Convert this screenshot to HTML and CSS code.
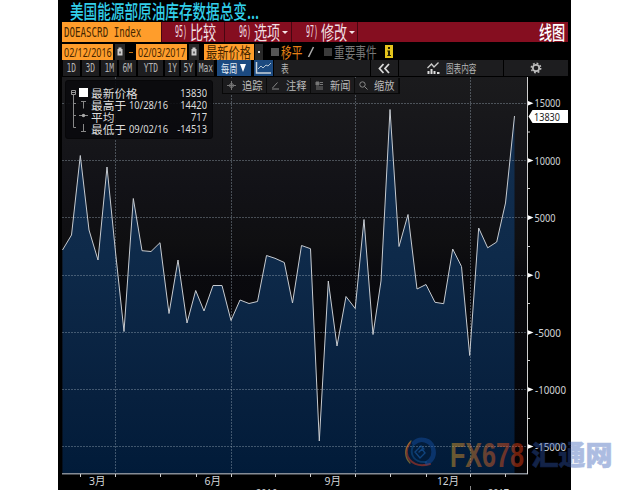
FILE: index.html
```html
<!DOCTYPE html>
<html lang="zh-CN">
<head>
<meta charset="utf-8">
<title>DOEASCRD Index</title>
<link rel="stylesheet" href="styles.css">
</head>
<body>
<main class="terminal">
  <h1 class="title"><span>美国能源部原油库存数据总变...</span></h1>

  <nav class="menu">
    <div class="ticker"><span class="mono">DOEASCRD Index</span></div>
    <div class="menu-item compare"><span class="num">95)</span><span class="label">比较</span></div>
    <div class="menu-item options"><span class="num">96)</span><span class="label">选项</span><i class="caret"></i></div>
    <div class="menu-item modify"><span class="num">97)</span><span class="label">修改</span><i class="caret"></i></div>
    <div class="chart-kind"><span class="label">线图</span></div>
  </nav>

  <div class="filters">
    <div class="date"><span>02/12/2016</span></div>
    <svg class="cal" viewBox="0 0 10 16"><path d="M0 0h10v16H0z" fill="#292929"/><path d="M2.500 5h5v6.500h-5zM3.500 3.500h3V5h-3z" fill="#ccc"/><path d="M4 7.500h2v2H4z" fill="#666"/></svg>
    <b class="dash"></b>
    <div class="date"><span>02/03/2017</span></div>
    <svg class="cal" viewBox="0 0 10 16"><path d="M0 0h10v16H0z" fill="#292929"/><path d="M2.500 5h5v6.500h-5zM3.500 3.500h3V5h-3z" fill="#ccc"/><path d="M4 7.500h2v2H4z" fill="#666"/></svg>
    <div class="field"><span>最新价格</span></div>
    <div class="drop"></div>
    <i class="check first"></i><span class="f-label move">移平</span>
    <svg class="pencil" viewBox="0 0 8 14"><path d="M1.500 12 6.500 2" stroke="#aaa" stroke-width="1.600"/></svg>
    <i class="check second"></i><span class="f-label events">重要事件</span>
    <svg class="info" viewBox="0 0 8 13"><path d="M0 0h8v13H0z" fill="#e5c51c"/><path d="M3 2h2v2H3zM2.300 5.500H5V10h1v1H2.300v-1H3V6.500h-.7z" fill="#242000"/></svg>
  </div>

  <div class="ranges">
    <div class="btn w17"><span>1D</span></div>
    <div class="btn w17"><span>3D</span></div>
    <div class="btn w16"><span>1M</span></div>
    <div class="btn w17"><span>6M</span></div>
    <div class="btn w25"><span>YTD</span></div>
    <div class="btn w14"><span>1Y</span></div>
    <div class="btn w14"><span>5Y</span></div>
    <div class="btn w17"><span>Max</span></div>
    <div class="period"><span>每周</span><i></i></div>
    <svg class="line-icon" viewBox="0 0 19 16"><path d="M0 0h19v16H0z" fill="#1c4a80"/><path d="M2.500 2v11H17" stroke="#c9d3dc" stroke-width="1.500" fill="none"/><path d="m4 9 3-3 2 2 3-3 2 1 3-3" stroke="#b5c4d3" fill="none"/></svg>
    <div class="table-btn"><span>表</span></div>
    <div class="spacer"></div>
    <div class="collapse"><svg viewBox="0 0 12 11"><path d="M5.500 1 1.500 5.500l4 4.500M11 1 7 5.500l4 4.500" stroke="#d8d8d8" stroke-width="1.800" fill="none"/></svg></div>
    <div class="content-btn"><svg viewBox="0 0 13 12"><path d="m.5 6 4-4L7 5l4.500-4.500" stroke="#ccc" stroke-width="1.300" fill="none"/><path d="M.5 9h2v3h-2zM3.500 7h2v5h-2zM6.500 9h2v3h-2zM10 10h2.500v2H10z" fill="#ddd"/></svg><span>图表内容</span></div>
    <div class="gear"><svg viewBox="0 0 12 12"><circle cx="6" cy="6" r="3.200" stroke="#bbb" stroke-width="1.800" fill="none"/><circle cx="6" cy="6" r="4.700" stroke="#bbb" stroke-width="1.500" stroke-dasharray="1.800 1.890" fill="none"/></svg></div>
  </div>

  <section class="chart">
    <svg class="plot" viewBox="62 77 509 413">
      <defs>
        <linearGradient id="bg" x1="0" y1="0" x2="0" y2="1">
          <stop offset="0" stop-color="#1b1b1d"/><stop offset=".28" stop-color="#121217"/><stop offset=".42" stop-color="#0f0f11"/><stop offset=".5" stop-color="#0a0a0e"/><stop offset="1" stop-color="#030306"/>
        </linearGradient>
        <linearGradient id="area" gradientUnits="userSpaceOnUse" x1="0" y1="110" x2="0" y2="474">
          <stop offset="0" stop-color="#132f50"/><stop offset=".4" stop-color="#0e2a4a"/><stop offset=".75" stop-color="#08213f"/><stop offset="1" stop-color="#011b39"/>
        </linearGradient>
      </defs>
      <rect x="62" y="77" width="465" height="396" fill="url(#bg)"/>
      <path fill="url(#area)" d="M62.500 250 71.500 235 80.300 155.500 89 230 98 260 107 167 115.500 252 124 331.500 133.300 198.500 142 250.700 151 251.500 160 242.700 169 313.500 178 260 187 323 195.700 290.500 204 311 213 285.500H222L231 320.500 240 300 249 303.500 257.500 301.500 266.500 255.500 275 258.300 284.300 262.500 292.500 303 301.500 245.500 310.500 248.700 319.300 441 328.300 281 337 346 346 296.500 355.200 308.500 364 219.500 373 334.500 381 281 390 109.500 399 246.500 408 214.500 417 289 426 284.500 435 302.300 443.700 303.700 452.700 249 461.500 266.500 469.700 355.500 478.700 228 487.700 247.800 496.700 242 505.500 203 514.500 116V473H62.500z"/>
      <path class="grid" d="M62 103.500H527M62 160.500H527M62 217.500H527M62 275.500H527M62 332.500H527M62 389.500H527M62 446.500H527M115.500 77V473M231.500 77V473M355.500 77V473M470.500 77V473"/>
      <path class="series" d="M62.500 250 71.500 235 80.300 155.500 89 230 98 260 107 167 115.500 252 124 331.500 133.300 198.500 142 250.700 151 251.500 160 242.700 169 313.500 178 260 187 323 195.700 290.500 204 311 213 285.500H222L231 320.500 240 300 249 303.500 257.500 301.500 266.500 255.500 275 258.300 284.300 262.500 292.500 303 301.500 245.500 310.500 248.700 319.300 441 328.300 281 337 346 346 296.500 355.200 308.500 364 219.500 373 334.500 381 281 390 109.500 399 246.500 408 214.500 417 289 426 284.500 435 302.300 443.700 303.700 452.700 249 461.500 266.500 469.700 355.500 478.700 228 487.700 247.800 496.700 242 505.500 203 514.500 116"/>
      <path class="axis-x" d="M62 473.700H528"/>
      <path class="axis" d="M527.500 77V474M528 132h2M528 188.500h2M528 246.500h2M528 303.500h2M528 360.500h2M528 418.500h2"/>
      <path class="axis" d="M80.500 474v3M115.500 474v3M160.500 474v3M196.500 474v3M231.500 474v3M275.500 474v3M310.500 474v3M355.500 474v3M390.500 474v3M426.500 474v3M470.500 474v3M505.500 474v3"/>
      <path d="M470.500 486v4" stroke="#888"/>
      <path class="marks" d="M528 101l5.500 2.300-5.500 2.300zM528 158.200l5.500 2.300-5.500 2.300zM528 215.300l5.500 2.300-5.500 2.300zM528 273l5.500 2.300-5.500 2.300zM528 330.200l5.500 2.300-5.500 2.300zM528 387.200l5.500 2.300-5.500 2.300zM528 444.200l5.500 2.300-5.500 2.300z"/>
      <g class="tick">
        <text x="534.500" y="107.300" textLength="26" lengthAdjust="spacingAndGlyphs">15000</text>
        <text x="534.500" y="164.500" textLength="26" lengthAdjust="spacingAndGlyphs">10000</text>
        <text x="534.500" y="221.800" textLength="21" lengthAdjust="spacingAndGlyphs">5000</text>
        <text x="534.500" y="279.300" textLength="5.500" lengthAdjust="spacingAndGlyphs">0</text>
        <text x="535" y="336.600" textLength="26" lengthAdjust="spacingAndGlyphs">-5000</text>
        <text x="535" y="393.800" textLength="31" lengthAdjust="spacingAndGlyphs">-10000</text>
        <text x="535" y="450.800" textLength="31" lengthAdjust="spacingAndGlyphs">-15000</text>
        <text x="89" y="485" textLength="16.500" lengthAdjust="spacingAndGlyphs">3月</text>
        <text x="204.500" y="485" textLength="16.500" lengthAdjust="spacingAndGlyphs">6月</text>
        <text x="324.500" y="485" textLength="16.500" lengthAdjust="spacingAndGlyphs">9月</text>
        <text x="437" y="485" textLength="22" lengthAdjust="spacingAndGlyphs">12月</text>
        <text x="256" y="497" textLength="21" lengthAdjust="spacingAndGlyphs">2016</text>
        <text x="488" y="497" textLength="21" lengthAdjust="spacingAndGlyphs">2017</text>
      </g>
      <path d="m528.500 116.500 4-6.500H568v13h-35.500z" fill="#fff"/>
      <text class="last" x="534" y="121" textLength="26" lengthAdjust="spacingAndGlyphs">13830</text>
    </svg>

    <div class="legend">
      <svg class="tree" viewBox="0 0 20 50"><path d="M2.500 8v32.500H5M2.500 16.500H5M2.500 28.500H5" stroke="#888" fill="none"/><path d="M.5 3.500h4v4h-4zM1 5.500h3" stroke="#999" fill="none"/><path d="M8 1h9v9H8z" fill="#fff"/><path d="M10 14.500h5M12.500 14.500v7M12.500 37v7.500M10 44.500h5M8 28.500h9" stroke="#888" fill="none"/><circle cx="12.500" cy="28.500" r="1.700" fill="#aaa"/></svg>
      <dl>
        <div><dt>最新价格</dt><dd class="value">13830</dd></div>
        <div><dt>最高于</dt><dd class="day">10/28/16</dd><dd class="value">14420</dd></div>
        <div><dt>平均</dt><dd class="value">717</dd></div>
        <div><dt>最低于</dt><dd class="day">09/02/16</dd><dd class="value">-14513</dd></div>
      </dl>
    </div>

    <div class="tools">
      <div><svg viewBox="0 0 9 9"><path d="M4.500 0v9M0 4.500h9" stroke="#777"/><circle cx="4.500" cy="4.500" r="2" stroke="#777" fill="none"/></svg><span>追踪</span></div>
      <div><svg viewBox="0 0 9 9"><path d="m1.500 7 5-5.500M1 8h7" stroke="#888" fill="none"/></svg><span>注释</span></div>
      <div><svg viewBox="0 0 9 9"><path d="M1 1h3v3H1zM5 1.500h3M5 3.500h3M1 6h7M1 8h7" stroke="#777" fill="#777"/></svg><span>新闻</span></div>
      <div><svg viewBox="0 0 9 9"><circle cx="3.500" cy="3.500" r="2.700" stroke="#888" fill="none"/><path d="m5.500 5.500 3 3" stroke="#888"/></svg><span>缩放</span></div>
    </div>
  </section>
</main>

<svg class="watermark" viewBox="400 432 220 42">
  <defs>
    <linearGradient id="brand" x1="0" y1="0" x2="1" y2="0"><stop offset="0" stop-color="#cf9c2c"/><stop offset=".5" stop-color="#c8642c"/><stop offset="1" stop-color="#e03309"/></linearGradient>
  </defs>
  <g fill="none" stroke-linecap="round">
    <path d="M410 443c-9 12 2 26 20 21" stroke="#d73b20" stroke-width="2" opacity=".5"/>
    <path d="M411 441c-8 8-6 17-1 22" stroke="#d7a530" stroke-width="1.200" opacity=".5"/>
    <path d="M414 443c6-6 17-3 19 5 2 7-1 12-6 15" stroke="#1551a8" stroke-width="4.500" opacity=".45"/>
    <path d="M413 446c-4 9 2 17 13 16" stroke="#1764ac" stroke-width="2" opacity=".4"/>
    <path d="m424 449-3-3-6 6 5 6 5-5-3-4-3 3" stroke="#1c65b5" stroke-width="1.400" opacity=".55"/>
  </g>
  <text class="brand" x="450" y="466.500" textLength="74" lengthAdjust="spacingAndGlyphs">FX678</text>
  <text class="brand-cn" x="531.500" y="464.500" textLength="81" lengthAdjust="spacingAndGlyphs">汇通网</text>
</svg>
</body>
</html>
```
FILE: styles.css
```css
* { box-sizing: border-box; }
body {
  margin: 0;
  width: 630px;
  height: 490px;
  overflow: hidden;
  position: relative;
  background: #fff;
  font-family: "Noto Sans", "Noto Sans CJK SC", sans-serif;
}
.terminal {
  width: 513px;
  height: 490px;
  margin-left: 58px;
  padding-left: 4px;
  background: #000;
  overflow: hidden;
}
span { display: inline-block; white-space: nowrap; transform-origin: 0 50%; }
svg { display: block; flex: none; }

.title { display: flex; margin: 0; height: 22px; padding-left: 8px; font: 500 19.500px/22px "Noto Sans CJK SC", sans-serif; color: #32cfe9; }
.title span { transform: scaleX(.698); }

.menu { display: flex; width: 506px; height: 20px; margin-bottom: 1px; background: #850e20; color: #f0dfe2; }
.menu > div { display: flex; align-items: center; flex: none; border-right: 1px solid #470711; }
.menu .ticker { width: 100px; padding-left: 2px; background: #ff9d2b; color: #432500; }
.mono { font: 14px "DejaVu Sans Mono", monospace; transform: scaleX(.655); width: 0; }
.num { width: 15px; font: 15px "DejaVu Sans Mono", monospace; transform: scaleX(.44); }
.label { width: 27px; font: 19px/20px "Noto Sans CJK SC", sans-serif; transform: scaleX(.69); }
.compare { width: 63px; padding-left: 13px; }
.options { width: 67px; padding-left: 14px; }
.modify { width: 66px; padding-left: 14px; }
.caret { width: 0; height: 0; border: 3px solid transparent; border-top-color: #f4e5e7; border-bottom: 0; margin-left: 1px; }
.menu .chart-kind { flex: 1; border: 0; justify-content: flex-end; padding-right: 2px; color: #fff; }
.chart-kind .label { font-weight: 500; }

.filters { display: flex; align-items: center; height: 17px; }
.filters > * { flex: none; }
.date, .field { display: flex; align-items: center; width: 51px; height: 16px; background: #ff9d2b; color: #452500; }
.date span { width: 47px; margin-left: 2px; font-size: 13px; line-height: 16px; transform: scaleX(.69); }
.field { margin-left: 5px; width: 50px; }
.field span { width: 45px; margin-left: 2px; font: 15px/16px "Noto Sans CJK SC", sans-serif; transform: scaleX(.75); }
.cal { width: 10px; height: 16px; margin-left: 2px; }
.dash { width: 4px; height: 1px; margin: 2px 3px 0 4px; background: #c27418; }
.drop { width: 8px; height: 16px; background: #292929; margin-left: 1px; padding: 7px 3px; }
.drop::after { content: ""; display: block; width: 2px; height: 2px; background: #ddd; }
.check { width: 8px; height: 8px; margin-left: 9px; background: #555; }
.check.first { margin-left: 8px; }
.f-label { margin-left: 2px; font: 15px/16px "Noto Sans CJK SC", sans-serif; transform: scaleX(.71); }
.move { width: 26px; color: #e58016; }
.pencil { width: 8px; height: 14px; }
.check.second { background: #3b3b3b; }
.events { width: 51px; color: #777; }
.info { width: 8px; height: 13px; }

.ranges { display: flex; height: 16px; width: 506px; padding-left: 1px; }
.ranges > * { flex: none; height: 16px; background: #1d1d1f; color: #b5b5b5; }
.btn { display: flex; align-items: center; justify-content: center; margin-right: 2px; }
.btn span { font: 12px/16px "DejaVu Sans Mono", monospace; transform: scaleX(.66); transform-origin: 50% 50%; }
.btn.w14 { width: 14px; }
.btn.w16 { width: 16px; }
.btn.w17 { width: 17px; }
.btn.w25 { width: 25px; }
.ranges .period { display: flex; align-items: center; width: 34px; margin-left: 1px; padding-left: 4px; background: #1c4a80; color: #e5edf5; }
.period span { font: 11px/16px "Noto Sans CJK SC", sans-serif; width: 19px; transform: scaleX(.75); }
.period i { border: 3px solid transparent; border-top: 8px solid #fff; border-bottom: 0; }
.line-icon { width: 19px; margin-left: 3px; }
.table-btn { display: flex; width: 21px; margin-left: 1px; padding-left: 7px; }
.table-btn span { font: 11px/16px "Noto Sans CJK SC", sans-serif; transform: scaleX(.7); }
.ranges .spacer { flex: 1; }
.collapse { width: 27px; margin-left: 1px; padding: 3px 7px; }
.collapse svg { width: 12px; height: 11px; }
.content-btn { display: flex; align-items: center; width: 104px; margin-left: 1px; padding-left: 28px; }
.content-btn svg { width: 13px; height: 12px; margin-right: 6px; }
.content-btn span { font: 11px/16px "Noto Sans CJK SC", sans-serif; transform: scaleX(.69); }
.gear { display: flex; align-items: center; justify-content: center; width: 64px; margin-left: 1px; }
.gear svg { width: 12px; height: 12px; }

.chart { position: relative; margin-top: 1px; height: 413px; }
.plot { width: 509px; height: 413px; }
.grid { fill: none; stroke: #a4b4c0; stroke-opacity: .38; stroke-dasharray: 2 1; }
.series { fill: none; stroke: #c7cbd0; stroke-width: 1; stroke-linejoin: round; }
.axis { fill: none; stroke: #cfcfcf; }
.axis-x { stroke: #858c95; stroke-width: 1.500; }
.marks { fill: #fff; }
.tick { font-size: 11px; fill: #d2d5d8; }
.last { font-size: 11px; fill: #222; }

.legend { position: absolute; left: 3px; top: 3px; width: 148px; height: 59px; padding: 6px 5px 0 5px; display: flex; background: rgba(9, 9, 13, .88); border: 1px solid #070709; border-radius: 3px; }
.tree { width: 20px; height: 50px; }
.legend dl { flex: 1; margin: 0; font-size: 11px; line-height: 12px; color: #dcdcdc; }
.legend dl div { display: flex; height: 12px; align-items: center; }
.legend dt { font-size: 11.700px; width: 38px; white-space: nowrap; }
.legend dd { margin: 0; transform: scaleX(.85); transform-origin: 100% 50%; }
.legend .day { width: 42px; transform-origin: 0 50%; }
.legend .value { display: flex; justify-content: flex-end; width: 36px; margin-left: auto; }

.tools { position: absolute; left: 160px; top: 1px; width: 178px; height: 16px; display: flex; background: #1c1c1e; border: 1px solid #080808; border-top: 0; }
.tools div { flex: 1; display: flex; align-items: center; padding-left: 4px; border-right: 1px solid #0b0b0b; }
.tools svg { width: 9px; height: 9px; margin-right: 6px; }
.tools span { font: 11px/15px "Noto Sans CJK SC", sans-serif; color: #bbb; transform: scaleX(.93); }

.watermark { position: absolute; left: 400px; top: 432px; width: 220px; height: 42px; }
.brand { font: bold 35px "Liberation Sans", sans-serif; fill: url(#brand); opacity: .5; }
.brand-cn { font: 900 27px "Noto Sans CJK SC", sans-serif; fill: #3159b5; stroke: #3159b5; stroke-width: .6px; opacity: .4; }
```
